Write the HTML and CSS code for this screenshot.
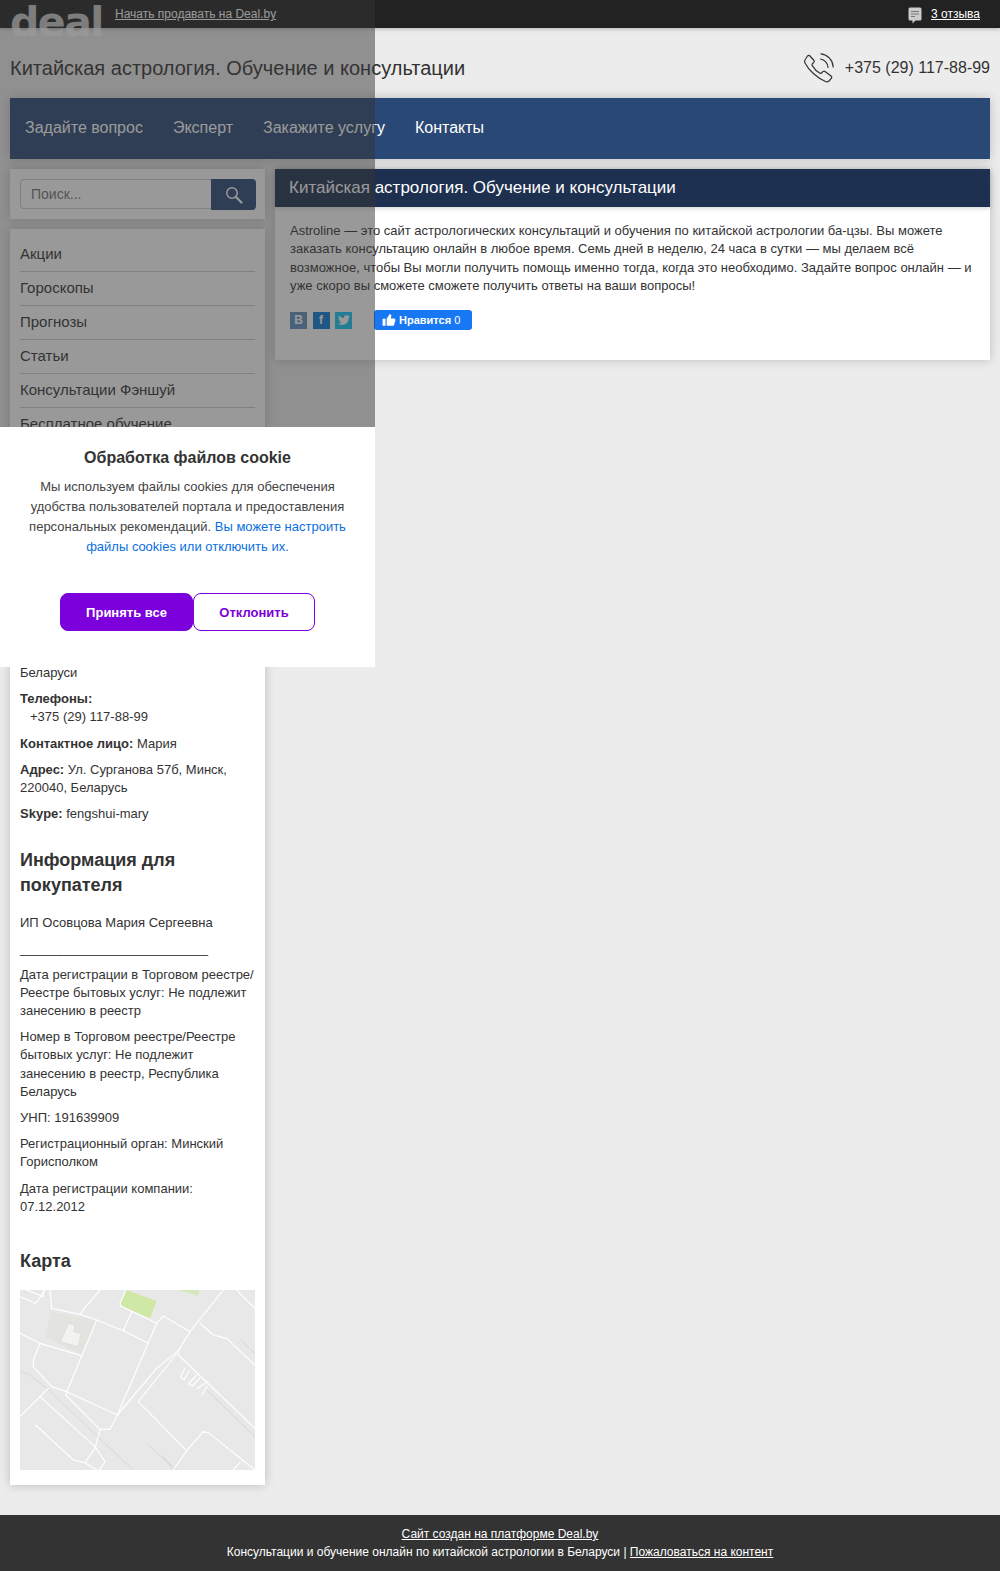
FILE: index.html
```html
<!DOCTYPE html>
<html lang="ru">
<head>
  <meta charset="UTF-8" />
  <title>Китайская астрология. Обучение и консультации</title>
  <meta name="viewport" content="width=device-width, initial-scale=1" />
  <link rel="stylesheet" href="styles.css">
</head>
<body>
  <div class="topbar">
    <span class="logo">deal</span>
    <a href="#" class="topbar-link">Начать продавать на Deal.by</a>
    <div class="reviews">
      <svg class="reviews-icon" width="14" height="17" viewBox="0 0 14 17">
        <path d="M2 0.5h10a1.5 1.5 0 0 1 1.5 1.5v10a1.5 1.5 0 0 1-1.5 1.5H7.5L4.5 16.5V13.5H2A1.5 1.5 0 0 1 .5 12V2A1.5 1.5 0 0 1 2 .5z" fill="#ccc"/>
        <path d="M3 4h8v1H3zM3 6.5h8v1H3zM3 9h4v1H3z" fill="#777"/>
      </svg>
      <a href="#">3 отзыва</a>
    </div>
  </div>

  <div class="site-head">
    <div class="site-title">Китайская астрология. Обучение и консультации</div>
    <div class="site-phone">
      <svg width="30" height="30" viewBox="0 0 30 30" fill="none" stroke="#333" stroke-width="1.2" stroke-linecap="round" stroke-linejoin="round">
        <path d="M5.5 2.5L10 7.5Q10.5 8.5 9.8 9.3L8.2 11Q7.8 11.8 8.3 12.6C10 15.5 12.8 18.5 16 20.3Q16.8 20.7 17.5 20L19.2 18.4Q20 17.8 21 18.4L27 23Q28.2 24 27.5 25.2L25 28Q23.5 29.3 21.5 28.5C13 25 4.5 17 1 10Q0 8 1.5 6L3.5 3Q4.5 2 5.5 2.5Z"/>
        <path d="M17 .8A14 14 0 0 1 29.2 14"/>
        <path d="M16.5 6A9 9 0 0 1 24 14.5"/>
      </svg>
      <span>+375 (29) 117-88-99</span>
    </div>
  </div>

  <nav class="main-nav">
    <a href="#">Задайте вопрос</a>
    <a href="#">Эксперт</a>
    <a href="#">Закажите услугу</a>
    <a href="#">Контакты</a>
  </nav>

  <div class="columns">
    <aside class="sidebar">
      <div class="panel search-panel">
        <input class="search-input" type="text" placeholder="Поиск..." />
        <button class="search-btn" aria-label="Поиск">
          <svg width="18" height="18" viewBox="0 0 18 18" fill="none" stroke="#fff" stroke-linecap="round">
            <circle cx="7" cy="7" r="5.2" stroke-width="1.5"/>
            <path d="M11 11l5.5 5.5" stroke-width="2.2"/>
          </svg>
        </button>
      </div>

      <div class="panel info-panel">
        <ul class="side-menu">
          <li><a href="#">Акции</a></li>
          <li><a href="#">Гороскопы</a></li>
          <li><a href="#">Прогнозы</a></li>
          <li><a href="#">Статьи</a></li>
          <li><a href="#">Консультации Фэншуй</a></li>
          <li><a href="#">Бесплатное обучение</a></li>
        </ul>

        <p class="contacts-start">Беларуси</p>
        <p class="tight"><b>Телефоны:</b></p>
        <p class="phone-line">+375 (29) 117-88-99</p>
        <p><b>Контактное лицо:</b> Мария</p>
        <p><b>Адрес:</b> Ул. Сурганова 57б, Минск, 220040, Беларусь</p>
        <p><b>Skype:</b> fengshui-mary</p>

        <h3>Информация для покупателя</h3>
        <p class="owner">ИП Осовцова Мария Сергеевна</p>
        <p class="rule">__________________________</p>
        <p>Дата регистрации в Торговом реестре/Реестре бытовых услуг: Не подлежит занесению в реестр</p>
        <p>Номер в Торговом реестре/Реестре бытовых услуг: Не подлежит занесению в реестр, Республика Беларусь</p>
        <p>УНП: 191639909</p>
        <p>Регистрационный орган: Минский Горисполком</p>
        <p>Дата регистрации компании: 07.12.2012</p>

        <h3 class="map-title">Карта</h3>
        <svg class="map" width="235" height="180" viewBox="0 0 705 540" fill="none" stroke-linecap="round" stroke-linejoin="round">
          <g transform="translate(-60 -30)">
            <rect x="60" y="30" width="705" height="540" fill="#e8e8e8"/>
            <path d="M155 95L290 120L245 225L135 170Z" fill="#e3e4df"/>
            <path d="M205 130L225 135L222 155L243 160L235 200L180 185L195 155Z" fill="#f2f2ef" stroke="#d5d6d1" stroke-width="2"/>
            <path d="M378 30L470 62L450 115L365 78L362 68Z" fill="#cfe8a5"/>
            <path d="M535 30L600 30L593 47Z" fill="#d6e8bb"/>
            <g stroke="#cfcfcf" stroke-width="2">
              <path d="M60 272L90 285L140 325L400 570"/>
              <path d="M722 180L765 220"/>
              <path d="M445 495L530 570"/>
              <path d="M490 530L520 570"/>
              <path d="M620 330L765 470"/>
            </g>
            <g stroke="#fff" stroke-width="3.5">
              <path d="M60 50L105 70L115 60L135 30"/>
              <path d="M80 30L130 50M130 30V50M150 30L155 85"/>
              <path d="M155 85L240 103L290 120L370 152L445 190"/>
              <path d="M240 103L255 83L300 30"/>
              <path d="M290 120L205 325L197 345L300 448H330L352 405L470 130L490 108L570 155L670 30"/>
              <path d="M60 160L120 190L245 227"/>
              <path d="M120 190L100 240V260L155 320L200 335L352 405"/>
              <path d="M60 410L145 325"/>
              <path d="M370 152L395 95"/>
              <path d="M470 130L362 78L360 70L378 30"/>
              <path d="M352 405L470 265L535 212L570 155"/>
              <path d="M535 212V225L765 445"/>
              <path d="M530 222L415 365L560 512L520 570"/>
              <path d="M560 512L610 455L625 458L765 570"/>
              <path d="M120 350L285 500L315 545L298 570"/>
              <path d="M107 435L220 540L255 548L290 570"/>
              <path d="M300 450L285 505L255 548"/>
              <path d="M600 130L640 165L680 175L765 255"/>
              <path d="M710 30L765 85M720 548L700 570"/>
              <path d="M555 265L542 290L552 300L568 272M590 285L565 312L578 318L600 293M622 305L592 325M622 318L605 345"/>
            </g>
          </g>
        </svg>
      </div>
    </aside>

    <main class="panel content">
      <h2 class="content-title">Китайская астрология. Обучение и консультации</h2>
      <div class="content-body">
        <p>Astroline — это сайт астрологических консультаций и обучения по китайской астрологии ба-цзы. Вы можете заказать консультацию онлайн в любое время. Семь дней в неделю, 24 часа в сутки — мы делаем всё возможное, чтобы Вы могли получить помощь именно тогда, когда это необходимо. Задайте вопрос онлайн — и уже скоро вы сможете сможете получить ответы на ваши вопросы!</p>
        <div class="share">
          <a href="#" class="share-icon share-vk">В</a>
          <a href="#" class="share-icon share-fb">f</a>
          <a href="#" class="share-icon share-tw">
            <svg width="12" height="12" viewBox="0 0 24 24" fill="#fff"><path d="M23.953 4.57a10 10 0 01-2.825.775 4.958 4.958 0 002.163-2.723c-.951.555-2.005.959-3.127 1.184a4.92 4.92 0 00-8.384 4.482C7.69 8.095 4.067 6.13 1.64 3.162a4.822 4.822 0 00-.666 2.475c0 1.71.87 3.213 2.188 4.096a4.904 4.904 0 01-2.228-.616v.06a4.923 4.923 0 003.946 4.827 4.996 4.996 0 01-2.212.085 4.936 4.936 0 004.604 3.417 9.867 9.867 0 01-6.102 2.105c-.39 0-.779-.023-1.17-.067a13.995 13.995 0 007.557 2.209c9.053 0 13.998-7.496 13.998-13.985 0-.21 0-.42-.015-.63A9.935 9.935 0 0024 4.59z"/></svg>
          </a>
          <button class="like-btn">
            <svg width="14" height="14" viewBox="0 0 24 24" fill="#fff"><path d="M1 10h5v12H1zM8 22h10c1.5 0 2.4-.9 2.8-2l2.2-7.5c.4-1.6-.7-3.2-2.4-3.2h-5.4l.9-4.3C16 3.400 14.800 1.500 13.200 1.500L8 10z"/></svg>
            <span><b>Нравится</b> 0</span>
          </button>
        </div>
      </div>
    </main>
  </div>

  <footer class="footer">
    <div><a href="#">Сайт создан на платформе Deal.by</a></div>
    <div>Консультации и обучение онлайн по китайской астрологии в Беларуси | <a href="#">Пожаловаться на контент</a></div>
  </footer>

  <div class="cookie-layer">
    <div class="dim-page"></div>
    <div class="cookie-box">
      <div class="cookie-title">Обработка файлов cookie</div>
      <p class="cookie-text">Мы используем файлы cookies для обеспечения удобства пользователей портала и предоставления персональных рекомендаций. <a href="#">Вы можете настроить файлы cookies или отключить их.</a></p>
      <div class="cookie-actions">
        <button class="cookie-btn cookie-accept">Принять все</button>
        <button class="cookie-btn cookie-decline">Отклонить</button>
      </div>
    </div>
  </div>
</body>
</html>
```

FILE: styles.css
```css
* {
  box-sizing: border-box;
}
body {
  margin: 0;
  background-color: #ececec;
  font-family: "Liberation Sans", Arial, sans-serif;
  font-size: 13px;
  line-height: 1.4;
  color: #333;
}
a {
  color: inherit;
}

.topbar {
  display: flex;
  align-items: flex-start;
  height: 28px;
  padding: 0 20px 0 10px;
  background-color: #222;
  box-shadow: 0 1px 4px rgba(0, 0, 0, 0.25);
  font-size: 12px;
  line-height: 28px;
  color: #fff;
}
.logo {
  width: 105px;
  font-family: "DejaVu Sans", sans-serif;
  font-weight: bold;
  font-size: 41px;
  line-height: 44px;
  letter-spacing: -1.5px;
  color: rgba(255, 255, 255, 0.77);
}
.reviews {
  display: flex;
  align-items: center;
  gap: 9px;
  margin-left: auto;
}
.reviews-icon {
  margin-top: 2px;
}

.site-head {
  display: flex;
  justify-content: space-between;
  align-items: center;
  height: 60px;
  margin: 10px 10px 0;
}
.site-title {
  font-size: 20px;
}
.site-phone {
  display: flex;
  align-items: center;
  gap: 11px;
  font-size: 16px;
}

.main-nav {
  display: flex;
  height: 61px;
  margin: 0 10px;
  background-color: #2a4875;
  box-shadow: 0 0 10px rgba(0, 0, 0, 0.2);
}
.main-nav a {
  padding: 0 15px;
  font-size: 16px;
  line-height: 60px;
  color: #fff;
  text-decoration: none;
}

.columns {
  display: flex;
  align-items: flex-start;
  gap: 10px;
  margin: 10px 10px 30px;
}
.sidebar {
  display: flex;
  flex-direction: column;
  gap: 10px;
  width: 255px;
  flex-shrink: 0;
}
.panel {
  background-color: #fff;
  box-shadow: 0 0 10px rgba(0, 0, 0, 0.2);
}

.search-panel {
  display: flex;
  height: 50px;
  padding: 10px;
}
.search-input {
  flex: 1;
  min-width: 0;
  height: 30px;
  padding: 0 10px;
  border: 1px solid #ccc;
  border-right: none;
  border-radius: 4px 0 0 4px;
  background-color: #fff;
  font: 14px "Liberation Sans", Arial, sans-serif;
}
.search-btn {
  display: flex;
  justify-content: center;
  align-items: center;
  width: 45px;
  height: 31px;
  margin-right: -1px;
  border: none;
  border-radius: 0 4px 4px 0;
  background-color: #2a4875;
}

.info-panel {
  height: 1256px;
  padding: 9px 10px 0;
}
.side-menu {
  margin: 0;
  padding: 0;
  list-style: none;
}
.side-menu li {
  padding: 7px 0 8px;
  border-bottom: 1px solid #ccc;
  font-size: 15px;
  line-height: 18px;
}
.side-menu li:last-child {
  border-bottom: none;
}
.side-menu a {
  text-decoration: none;
}

.info-panel p {
  margin: 0 0 8px;
}
.info-panel p.contacts-start {
  margin-top: 223px;
}
.info-panel p.tight {
  margin-bottom: 0;
}
.info-panel p.phone-line {
  padding-left: 10px;
}
.info-panel h3 {
  margin: 25px 0 16px;
  font-size: 18px;
  line-height: 25px;
}
.info-panel h3.map-title {
  margin: 33px 0 16px;
}
.info-panel p.owner {
  margin-bottom: 7px;
}
.map {
  display: block;
}

.content {
  flex: 1;
  height: 191px;
}
.content-title {
  margin: 0;
  height: 38px;
  padding: 0 14px;
  background-color: #1e304f;
  font-size: 17px;
  font-weight: normal;
  line-height: 38px;
  color: #fff;
  box-shadow: 0 1px 5px rgba(0, 0, 0, 0.2);
}
.content-body {
  padding: 15px 15px 0;
}
.content-body p {
  margin: 0 0 15px;
  line-height: 18.3px;
}
.share {
  display: flex;
  align-items: center;
}
.share-icon {
  display: flex;
  justify-content: center;
  align-items: center;
  width: 17px;
  height: 17px;
  margin-right: 5.5px;
  font-size: 12px;
  font-weight: bold;
  color: #fff;
  text-decoration: none;
}
.share-vk {
  background-color: #5f91bf;
}
.share-fb {
  background-color: #0c78d4;
}
.share-tw {
  background-color: #14c6f4;
}
.like-btn {
  display: flex;
  align-items: center;
  gap: 3px;
  width: 98px;
  height: 20px;
  margin-left: 16.5px;
  padding: 0 0 0 8px;
  border: none;
  border-radius: 3px;
  background-color: #1877f2;
  font: 11px "Liberation Sans", Arial, sans-serif;
  color: #fff;
}

.footer {
  height: 56px;
  padding-top: 10px;
  background-color: #333;
  font-size: 12px;
  line-height: 18px;
  text-align: center;
  color: #fff;
}

/* cookie dialog, lies over the page in a phone-size box */
.cookie-layer {
  position: absolute;
  top: 0;
  left: 0;
  display: flex;
  flex-direction: column;
  width: 375px;
  height: 667px;
}
.dim-page {
  flex: 1;
  background-color: rgba(51, 51, 51, 0.5);
}
.cookie-box {
  height: 240px;
  padding: 21px 20px 0;
  background-color: #fff;
  text-align: center;
}
.cookie-title {
  font-size: 16px;
  font-weight: bold;
  line-height: 20px;
}
.cookie-text {
  margin: 9px 0 0;
  line-height: 20px;
  color: #444;
}
.cookie-text a {
  color: #0a6fe0;
  text-decoration: none;
}
.cookie-actions {
  display: flex;
  justify-content: center;
  margin-top: 36px;
}
.cookie-btn {
  height: 38px;
  border: 1px solid #7b00db;
  border-radius: 8px;
  font: bold 13px "Liberation Sans", Arial, sans-serif;
}
.cookie-accept {
  width: 133px;
  background-color: #7b00db;
  color: #fff;
}
.cookie-decline {
  width: 122px;
  background-color: #fff;
  color: #7b00db;
}
```
